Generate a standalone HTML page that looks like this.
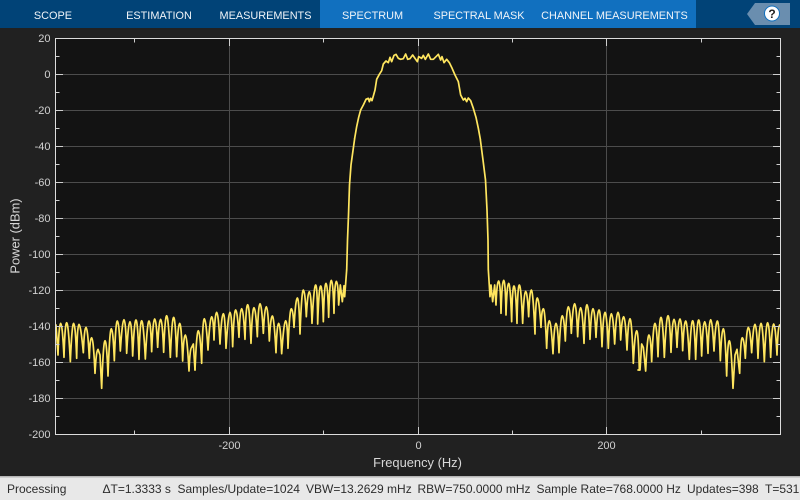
<!DOCTYPE html>
<html><head><meta charset="utf-8">
<style>
html,body{margin:0;padding:0;background:#212121;width:800px;height:500px;overflow:hidden}
svg{display:block;font-family:"Liberation Sans",sans-serif}
</style></head>
<body>
<svg width="800" height="500" viewBox="0 0 800 500" xmlns="http://www.w3.org/2000/svg">
<rect width="800" height="500" fill="#212121"/>
<!-- toolstrip -->
<rect width="800" height="28" fill="#014377"/>
<rect x="320" width="376" height="28" fill="#1170bf"/>
<g font-size="10.900" fill="#f0f4f8" text-anchor="middle">
<text x="53" y="19">SCOPE</text>
<text x="159" y="19">ESTIMATION</text>
<text x="265.500" y="19">MEASUREMENTS</text>
<text x="372.500" y="19">SPECTRUM</text>
<text x="479" y="19">SPECTRAL MASK</text>
<text x="614.500" y="19">CHANNEL MEASUREMENTS</text>
</g>
<polygon points="755,3 790,3 790,25 755,25 747,14" fill="#6a8eaf"/>
<circle cx="772" cy="13.500" r="7.500" fill="#fff" stroke="#1170bf" stroke-width="1"/>
<text x="772" y="18" font-size="12" font-weight="bold" fill="#222" text-anchor="middle">?</text>
<!-- plot -->
<rect x="55.500" y="38.500" width="725" height="396" fill="#131313"/>
<path d="M56 74.500H780M56 110.500H780M56 146.500H780M56 182.500H780M56 218.500H780M56 254.500H780M56 290.500H780M56 326.500H780M56 362.500H780M56 398.500H780M229.500 39V434M418.500 39V434M606.500 39V434" stroke="#4c4c4c" stroke-width="1" fill="none"/>
<!-- trace -->
<svg x="55.500" y="38.500" width="725" height="396" viewBox="55.500 38.500 725 396">
<g fill="none" stroke="#ffe65f" stroke-width="1.700" stroke-linejoin="round" stroke-linecap="round">
<path transform="translate(50 270) scale(.33333)" stroke-width="5.100" d="M6 170L18 165L24 255Q27 160 32 160T42 262Q45 158 50 158T61 275Q66 160 71 160T80 265Q82 163 87 163T100 248Q103 172 108 172T118 265Q120 203 125 203T135 310Q139 238 144 238L150 255L155 355Q160 212 165 212T174 318Q179 176 184 176T193 272Q197 153 202 153T211 243Q217 149 222 149T230 250Q235 155 240 155T248 258Q253 150 258 150T267 268Q270 152 275 152T286 267Q292 153 297 153T305 245Q309 147 314 147T323 232Q327 148 332 148T341 247Q345 137 350 137T361 262Q366 142 371 142T380 260Q384 160 389 160T398 273Q401 195 406 195T417 303Q420 232 425 232L430 222L435 300"/>
<path transform="translate(190 270) scale(.33333)" stroke-width="5.100" d="M15 300Q20 182 25 182T35 280Q38 146 43 146T54 240Q60 140 65 140T72 210Q75 127 80 127T90 222Q95 131 100 131T108 235Q115 127 120 127T128 230Q132 120 137 120T147 202Q150 116 155 116T165 208Q168 104 173 104T183 220Q187 113 192 113T202 200Q205 101 210 101T220 190Q224 110 229 110T238 213Q242 138 247 138T258 248Q261 160 266 160T275 251Q282 152 287 152T294 235Q299 116 304 116T312 172Q317 84 322 84T330 192Q335 60 340 60T349 140Q353 65 358 65T366 160Q372 45 377 45T383 162Q387 48 392 48T400 155Q403 40 408 40T416 142Q419 31 424 31T432 130Q434 34 439 34T446 105L451 45L457 95L462 47L464 80L470 0"/>
<path d="M346.700 270L347.500 240L348.500 215L349.500 185L351 165L354.700 138.300"/>
<path transform="translate(340 40) scale(.33333)" stroke-width="5.100" d="M44 295L50 260L56 232L62 210L70 195L78 178L85 175L88 185L92 175L96 182L100 168L105 150L110 118L118 103L125 92L130 72L138 63L145 68L150 52L155 65L162 46L168 43L175 55L182 58L190 56L197 42L203 58L210 56L218 45L225 55L232 65L236 50L245 55L250 46L256 58L265 42L272 58L280 58L288 50L295 43L302 60L306 50L312 68L320 58L328 68L335 82L345 105L355 125L362 165L370 180L375 175L380 185L385 174L392 182L400 205L408 232L415 265L421 298"/>
<path d="M480.300 139.300L483 160L485.500 180L487 210L488 240L488.300 270"/>
<path transform="translate(480 270) scale(.33333)" stroke-width="5.100" d="M25 0L30 80L33 45L38 95L44 45L48 105Q51 33 56 33T63 130Q66 31 71 31T78 135Q81 40 86 40T95 155Q97 48 102 48T111 160Q113 45 118 45T128 160Q132 64 137 64T146 140Q149 60 154 60T165 192Q167 84 172 84T183 172Q185 116 190 116T200 235Q203 152 208 152T219 251Q223 160 228 160T237 248Q242 137 247 137T256 213Q260 110 265 110T274 190Q279 101 284 101T293 200Q297 113 302 113T312 220Q316 104 321 104T330 208Q334 116 339 116T348 202Q352 120 357 120T366 230Q370 127 375 127T385 235Q389 131 394 131T404 222Q409 127 414 127T422 210Q426 140 431 140T441 240Q445 146 450 146T460 280Q465 182 470 182T478 300"/>
<path transform="translate(640 270) scale(.33333)" stroke-width="5.100" d="M-6 300L0 300L5 222L10 232L17 303Q22 195 27 195T35 275Q40 160 45 160T54 260Q58 142 63 142T73 262Q79 137 84 137T93 247Q97 148 102 148T111 232Q115 147 120 147T128 242Q132 153 137 153T148 268Q153 152 158 152T167 268Q171 150 176 150T185 258Q189 155 194 155T204 250Q207 149 212 149T222 243Q227 153 232 153T241 272Q245 176 250 176T260 318Q263 212 268 212T279 355L285 255L291 238L299 310Q302 203 307 203T316 265Q320 172 325 172T335 248Q340 163 345 163T354 265Q358 160 363 160T373 275Q378 158 383 158T392 262Q396 162 401 162T411 255Q414 165 419 165L424 165"/>
</g>
</svg>
<!-- ticks -->
<path d="M56 74.500H63M56 110.500H63M56 146.500H63M56 182.500H63M56 218.500H63M56 254.500H63M56 290.500H63M56 326.500H63M56 362.500H63M56 398.500H63M780 74.500H773M780 110.500H773M780 146.500H773M780 182.500H773M780 218.500H773M780 254.500H773M780 290.500H773M780 326.500H773M780 362.500H773M780 398.500H773M229.500 39V46M418.500 39V46M606.500 39V46M229.500 434V427M418.500 434V427M606.500 434V427" stroke="#cfcfcf" stroke-width="1" fill="none"/>
<path d="M56 56.500H59.500M56 92.500H59.500M56 128.500H59.500M56 164.500H59.500M56 200.500H59.500M56 236.500H59.500M56 272.500H59.500M56 308.500H59.500M56 344.500H59.500M56 380.500H59.500M56 416.500H59.500M780 56.500H776.500M780 92.500H776.500M780 128.500H776.500M780 164.500H776.500M780 200.500H776.500M780 236.500H776.500M780 272.500H776.500M780 308.500H776.500M780 344.500H776.500M780 380.500H776.500M780 416.500H776.500M134.500 39V42.500M323.500 39V42.500M512.500 39V42.500M701.500 39V42.500M134.500 434V430.500M323.500 434V430.500M512.500 434V430.500M701.500 434V430.500" stroke="#cfcfcf" stroke-width="1" fill="none"/>
<rect x="55.500" y="38.500" width="725" height="396" fill="none" stroke="#dcdcdc" stroke-width="1"/>
<!-- y labels -->
<g font-size="11" fill="#d2d2d2" text-anchor="end">
<text x="50.500" y="42">20</text>
<text x="50.500" y="78">0</text>
<text x="50.500" y="114">-20</text>
<text x="50.500" y="150">-40</text>
<text x="50.500" y="186">-60</text>
<text x="50.500" y="222">-80</text>
<text x="50.500" y="258">-100</text>
<text x="50.500" y="294">-120</text>
<text x="50.500" y="330">-140</text>
<text x="50.500" y="366">-160</text>
<text x="50.500" y="402">-180</text>
<text x="50.500" y="438">-200</text>
</g>
<g font-size="11" fill="#d2d2d2" text-anchor="middle">
<text x="229.500" y="449">-200</text>
<text x="418.500" y="449">0</text>
<text x="606.500" y="449">200</text>
</g>
<text x="417.500" y="467" font-size="12.900" fill="#d8d8d8" text-anchor="middle">Frequency (Hz)</text>
<text transform="translate(19.500 236) rotate(-90)" font-size="12.900" fill="#d8d8d8" text-anchor="middle">Power (dBm)</text>
<!-- status bar -->
<rect y="477" width="800" height="23" fill="#e8e8e8"/>
<rect y="476" width="800" height="1.500" fill="#b5b5b5"/>
<g font-size="12" fill="#2c2c2c">
<text x="7" y="493">Processing</text>
<text x="102.500" y="493">ΔT=1.3333 s</text>
<text x="177.500" y="493">Samples/Update=1024</text>
<text x="306" y="493">VBW=13.2629 mHz</text>
<text x="417.500" y="493">RBW=750.0000 mHz</text>
<text x="536.500" y="493">Sample Rate=768.0000 Hz</text>
<text x="687" y="493">Updates=398</text>
<text x="765" y="493">T=531</text>
</g>
</svg>
</body></html>
